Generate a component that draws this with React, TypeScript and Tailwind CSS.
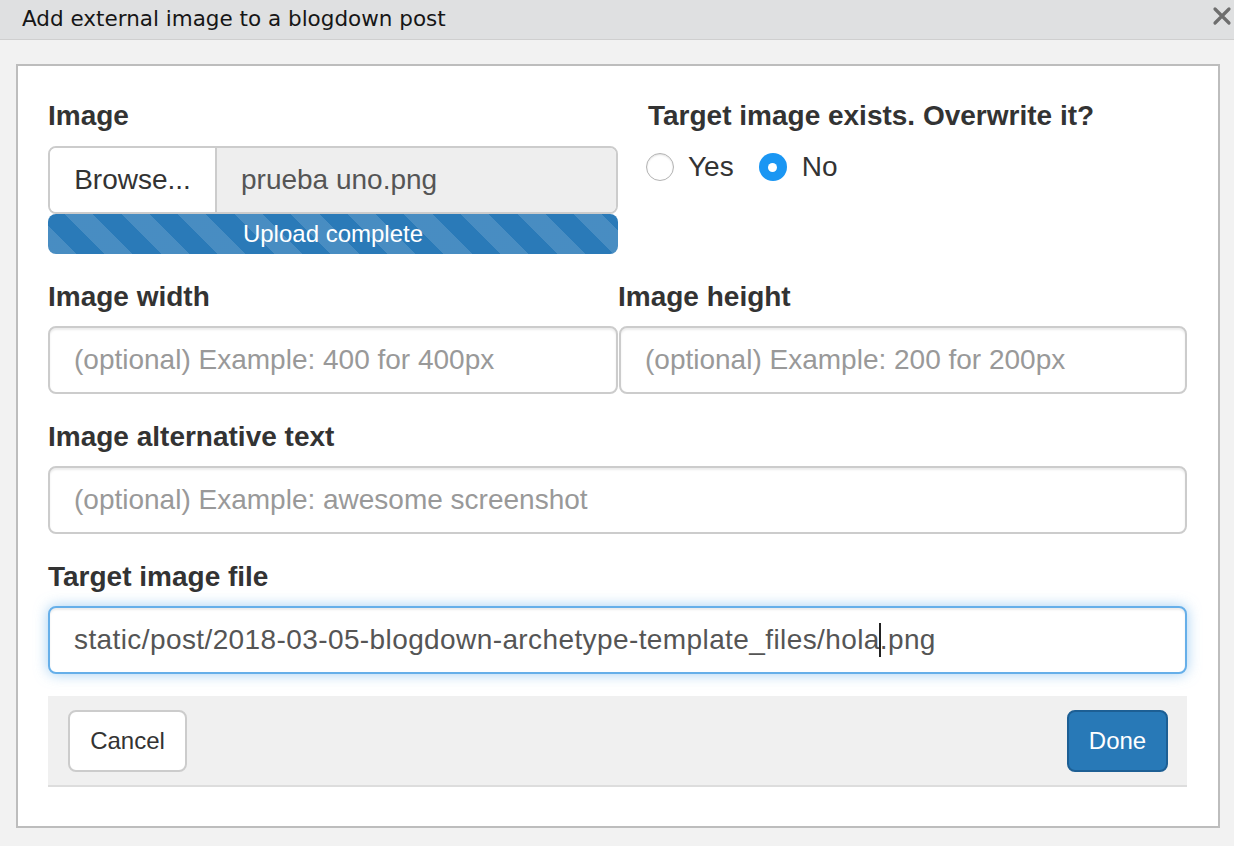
import React from "react";

function Label({ children, className = "" }: { children: React.ReactNode; className?: string }) {
  return (
    <div className={`h-[40px] leading-[40px] text-[28px] font-bold text-[#333] ${className}`}>{children}</div>
  );
}

function TextBox({ placeholder, className = "" }: { placeholder: string; className?: string }) {
  return (
    <div
      className={`h-[68px] border-2 border-[#cccccc] rounded-[8px] bg-white flex items-center pl-[24px] text-[28px] text-[#999] shadow-[inset_0_2px_2px_rgba(0,0,0,0.075)] ${className}`}
    >
      {placeholder}
    </div>
  );
}

export default function App() {
  return (
    <div className="w-[1234px] h-[846px] bg-[#f2f2f2] flex flex-col overflow-hidden font-['Liberation_Sans',Arial,sans-serif]">
      {/* Title bar */}
      <div className="h-[40px] shrink-0 bg-[#dfe0e1] border-b border-[#cfcfcf] flex items-center justify-between pl-[22px] pr-[2px]">
        <span className="font-['DejaVu_Sans',sans-serif] text-[21.5px] text-[#161616]">
          Add external image to a blogdown post
        </span>
        <svg width="20" height="20" viewBox="0 0 20 20" className="mb-[8px]">
          <path d="M3 3 L17 17 M17 3 L3 17" stroke="#6e6e6e" strokeWidth="3.2" strokeLinecap="round" />
        </svg>
      </div>

      {/* Body */}
      <div className="pl-[16px] pt-[24px]">
        <div className="w-[1204px] h-[764px] border-2 border-[#bdbdbd] bg-white pl-[30px] pt-[30px]">
          <div className="w-[1139px] flex flex-col">
            {/* Row 1 */}
            <div className="flex">
              <div className="w-[570px] flex flex-col">
                <Label>Image</Label>
                <div className="mt-[10px] h-[68px] flex border-2 border-[#cccccc] rounded-[8px] overflow-hidden">
                  <div className="w-[167px] bg-white border-r-2 border-[#cccccc] flex items-center justify-center text-[28px] text-[#333]">
                    Browse...
                  </div>
                  <div className="flex-1 bg-[#eeeeee] flex items-center pl-[24px] text-[28px] text-[#555]">
                    prueba uno.png
                  </div>
                </div>
                <div className="h-[40px] rounded-[8px] bg-[#2a7ab8] bg-[image:repeating-linear-gradient(45deg,rgba(255,255,255,0.14)_0px,rgba(255,255,255,0.14)_20px,transparent_20px,transparent_40px)] flex items-center justify-center text-[24px] text-white">
                  Upload complete
                </div>
              </div>
              <div className="ml-[30px] flex flex-col">
                <Label>Target image exists. Overwrite it?</Label>
                <div className="mt-[11px] h-[40px] flex items-center text-[28px] text-[#333]">
                  <div className="w-[28px] h-[28px] rounded-full border border-[#b3b3b3] bg-white shadow-[inset_0_1px_2px_rgba(0,0,0,0.12)] ml-[-2px]" />
                  <span className="ml-[14px]">Yes</span>
                  <div className="ml-[25px] w-[28px] h-[28px] rounded-full bg-[#1a96f3] flex items-center justify-center">
                    <div className="w-[9px] h-[9px] rounded-full bg-white" />
                  </div>
                  <span className="ml-[15px]">No</span>
                </div>
              </div>
            </div>

            {/* Row 2 */}
            <div className="flex mt-[23px]">
              <div className="w-[570px] flex flex-col">
                <Label>Image width</Label>
                <TextBox className="mt-[9px]" placeholder="(optional) Example: 400 for 400px" />
              </div>
              <div className="w-[569px] flex flex-col">
                <Label>Image height</Label>
                <TextBox className="mt-[9px] ml-[1px]" placeholder="(optional) Example: 200 for 200px" />
              </div>
            </div>

            {/* Row 3 */}
            <div className="flex flex-col mt-[23px]">
              <Label>Image alternative text</Label>
              <TextBox className="mt-[9px]" placeholder="(optional) Example: awesome screenshot" />
            </div>

            {/* Row 4 */}
            <div className="flex flex-col mt-[23px]">
              <Label>Target image file</Label>
              <div className="mt-[9px] h-[68px] border-2 border-[#66afe9] rounded-[8px] bg-white flex items-center pl-[24px] text-[28px] text-[#555] tracking-[0.4px] shadow-[inset_0_2px_2px_rgba(0,0,0,0.075),0_0_14px_rgba(102,175,233,0.6)]">
                <span>static/post/2018-03-05-blogdown-archetype-template_files/hola</span>
                <span className="inline-block w-[2px] h-[34px] bg-[#222] mx-[-1px]" />
                <span>.png</span>
              </div>
            </div>

            {/* Footer */}
            <div className="mt-[22px] h-[91px] bg-[#f0f0f0] border-b-2 border-[#dddddd] flex items-start justify-between pt-[14px] pl-[20px] pr-[19px]">
              <div className="w-[119px] h-[62px] rounded-[8px] border-2 border-[#cccccc] bg-white flex items-center justify-center text-[24px] text-[#333]">
                Cancel
              </div>
              <div className="w-[101px] h-[62px] rounded-[8px] border-2 border-[#1d5f94] bg-[#2879b7] flex items-center justify-center text-[24px] text-white">
                Done
              </div>
            </div>
          </div>
        </div>
      </div>
    </div>
  );
}
